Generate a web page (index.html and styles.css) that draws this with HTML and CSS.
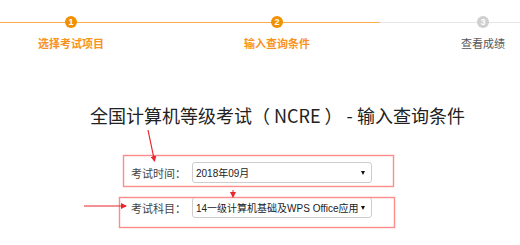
FILE: index.html
```html
<!DOCTYPE html>
<html lang="zh-CN">
<head>
  <meta charset="UTF-8">
  <title>全国计算机等级考试 - 输入查询条件</title>
  <link rel="stylesheet" href="styles.css">
</head>
<body>
  <div class="page">
    <ol class="steps">
      <li class="step done"><span class="num">1</span><span class="label">选择考试项目</span></li>
      <li class="step active"><span class="num">2</span><span class="label">输入查询条件</span></li>
      <li class="step"><span class="num">3</span><span class="label">查看成绩</span></li>
    </ol>

    <h1 class="title">全国计算机等级考试（ NCRE ） - 输入查询条件</h1>

    <form class="query">
      <div class="row">
        <label>考试时间：</label>
        <div class="select"><span>2018年09月</span><i class="caret"></i></div>
      </div>
      <div class="row">
        <label>考试科目：</label>
        <div class="select"><span>14一级计算机基础及WPS Office应用</span><i class="caret"></i></div>
      </div>
    </form>

    <!-- annotation marks drawn over the screenshot -->
    <svg class="marks" width="520" height="245" viewBox="0 0 520 245">
      <defs>
        <marker id="head" markerWidth="6" markerHeight="6" refX="5" refY="3" orient="auto" markerUnits="userSpaceOnUse">
          <path d="M0,0 L6,3 L0,6 Z" fill="#e8262b"/>
        </marker>
      </defs>
      <rect x="123.5" y="155.5" width="270" height="31" fill="none" stroke="#ff8c8c" stroke-width="1.4"/>
      <rect x="119.5" y="197.5" width="275" height="30" fill="none" stroke="#ff8c8c" stroke-width="1.4"/>
      <line x1="148" y1="130" x2="154.5" y2="161" stroke="#e8262b" stroke-width="1.2" marker-end="url(#head)"/>
      <line x1="84" y1="206" x2="126" y2="206" stroke="#e8262b" stroke-width="1.2" marker-end="url(#head)"/>
      <line x1="233" y1="190" x2="233" y2="197" stroke="#e8262b" stroke-width="1" marker-end="url(#head)"/>
    </svg>
  </div>
</body>
</html>
```

FILE: styles.css
```css
body {
  margin: 0;
  font-family: "Liberation Sans", "Noto Sans CJK SC", sans-serif;
  background: #fff;
  color: #333;
}

.page {
  position: relative;
  width: 520px;
  height: 245px;
  overflow: hidden;
}

/* progress steps */
.steps {
  display: flex;
  margin: 0 0 0 -32px;
  padding: 16px 0 0;
  list-style: none;
}

.step {
  position: relative;
  flex: none;
  width: 206px;
  display: flex;
  flex-direction: column;
  align-items: center;
}

.step::before,
.step::after {
  content: "";
  position: absolute;
  top: 6px;
  height: 1px;
  width: 50%;
  background: #e6e6e6;
}

.step::before { left: 0; }
.step::after { right: 0; }

.step.done::before,
.step.done::after,
.step.active::before,
.step.active::after {
  background: #f9ac4c;
}

.num {
  position: relative;
  z-index: 1;
  width: 12px;
  height: 12px;
  border-radius: 50%;
  background: #cfcfcf;
  color: #fff;
  font-size: 9px;
  font-weight: bold;
  line-height: 12px;
  text-align: center;
}

.done .num,
.active .num {
  background: #f29100;
}

.label {
  margin-top: 9px;
  font-size: 11px;
  line-height: 14px;
  color: #555;
}

.done .label,
.active .label {
  color: #f7931e;
  font-weight: bold;
}

/* title */
.title {
  margin: 52px 0 0 90px;
  font-size: 18px;
  font-weight: normal;
  line-height: 24px;
  color: #222;
  font-family: "Noto Sans CJK SC", sans-serif;
}

/* query form */
.query {
  margin: 35px 0 0 131px;
  display: flex;
  flex-direction: column;
  gap: 14px;
}

.row {
  display: flex;
  align-items: center;
}

.row label {
  width: 61px;
  font-size: 11px;
  color: #444;
  font-family: "Noto Sans CJK SC", sans-serif;
}

.select {
  box-sizing: border-box;
  width: 180px;
  height: 21px;
  padding: 0 6px 0 3px;
  display: flex;
  align-items: center;
  justify-content: space-between;
  border: 1px solid #cdcdcd;
  border-radius: 3px;
  background: #fff;
  font-size: 10px;
  color: #222;
}

.caret {
  flex: none;
  width: 0;
  height: 0;
  border-left: 2.5px solid transparent;
  border-right: 2.5px solid transparent;
  border-top: 4px solid #111;
}

.marks {
  position: absolute;
  left: 0;
  top: 0;
  pointer-events: none;
}
```
